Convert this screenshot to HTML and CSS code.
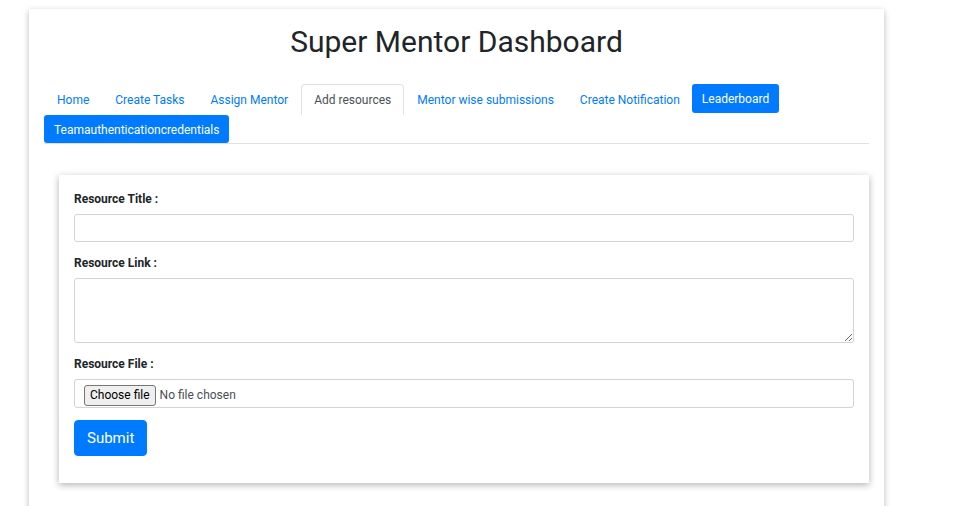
FILE: index.html
```html
<!DOCTYPE html>
<html>
<head>
<meta charset="utf-8">
<link rel="stylesheet" href="styles.css">
</head>
<body>
<div class="page">
  <div class="dash">
    <h1 class="title">Super Mentor Dashboard</h1>
    <ul class="tabs">
      <li><a class="tab">Home</a></li>
      <li><a class="tab">Create Tasks</a></li>
      <li><a class="tab">Assign Mentor</a></li>
      <li><a class="tab active">Add resources</a></li>
      <li><a class="tab">Mentor wise submissions</a></li>
      <li><a class="tab">Create Notification</a></li>
      <li><a class="pill">Leaderboard</a></li>
      <li><a class="pill">Teamauthenticationcredentials</a></li>
    </ul>
    <form class="form-card">
      <div class="group">
        <label class="label">Resource Title :</label>
        <input class="field" type="text">
      </div>
      <div class="group">
        <label class="label">Resource Link :</label>
        <textarea class="field area"></textarea>
      </div>
      <div class="group">
        <label class="label">Resource File :</label>
        <label class="field file">
          <input class="file-hidden" type="file">
          <span class="fbtn">Choose file</span>
          <span class="ftext">No file chosen</span>
        </label>
      </div>
      <button type="button" class="submit">Submit</button>
    </form>
  </div>
</div>
</body>
</html>
```
FILE: styles.css
```css
* { box-sizing: border-box; }
html, body { margin: 0; padding: 0; background: #fff; }
body {
  font-family: Roboto, "Liberation Sans", sans-serif;
  color: #212529;
  font-size: 12px;
  line-height: 1.5;
}
.page { padding: 9px 0 0 29px; }
.dash {
  width: 855px;
  min-height: 520px;
  background: #fff;
  box-shadow: 0 2px 6px rgba(0,0,0,0.28);
  padding: 14px 15px 20px 15px;
}
.title {
  margin: 0;
  font-size: 30px;
  font-weight: 400;
  line-height: 38px;
  text-align: center;
  color: #212529;
}
.tabs {
  list-style: none;
  margin: 23px 0 0 0;
  padding: 0;
  display: flex;
  flex-wrap: wrap;
  border-bottom: 1px solid #dee2e6;
}
.tab {
  display: block;
  padding: 6px 12px 4px;
  border: 1px solid transparent;
  border-radius: 4px 4px 0 0;
  color: #007bff;
  line-height: 19px;
  cursor: pointer;
}
.tab.active {
  color: #495057;
  border-color: #dee2e6 #dee2e6 #fff;
}
.pill {
  display: block;
  background: #007bff;
  color: #fff;
  padding: 5px 10px 3px;
  border-radius: 3px;
  line-height: 20px;
  height: 29px;
}
.tabs li:nth-child(7) { margin-left: -1px; }
.tabs li:last-child .pill { height: 28px; }
.form-card {
  margin: 31px 0 0 15px;
  background: #fff;
  box-shadow: 0 2px 7px rgba(0,0,0,0.3);
  padding: 15px 15px 27px 15px;
}
.group { margin-bottom: 12px; }
.label {
  display: block;
  font-size: 12px;
  font-weight: 700;
  line-height: 19px;
  margin-bottom: 5px;
  color: #212529;
}
.field {
  display: block;
  width: 100%;
  height: 28px;
  border: 1px solid #ced4da;
  border-radius: 3px;
  background: #fff;
  font-family: Roboto, "Liberation Sans", sans-serif;
  font-size: 12px;
  color: #495057;
  padding: 0 9px;
  margin: 0;
}
.area { height: 65px; resize: vertical; }
.file {
  height: 29px;
  display: flex;
  align-items: center;
  gap: 4px;
  padding-top: 3px;
  cursor: pointer;
}
.file-hidden { display: none; }
.fbtn {
  display: block;
  height: 21px;
  line-height: 19px;
  padding: 0 5px;
  background: #efefef;
  color: #000;
  border: 1px solid #767676;
  border-radius: 3px;
  font-size: 12px;
}
.ftext { color: #495057; font-size: 12px; }
.submit {
  display: block;
  margin-top: 12px;
  height: 36px;
  padding: 0 12px;
  background: #007bff;
  color: #fff;
  border: 1px solid #007bff;
  border-radius: 4px;
  font-family: Roboto, "Liberation Sans", sans-serif;
  font-size: 15px;
  line-height: 20px;
}
```
